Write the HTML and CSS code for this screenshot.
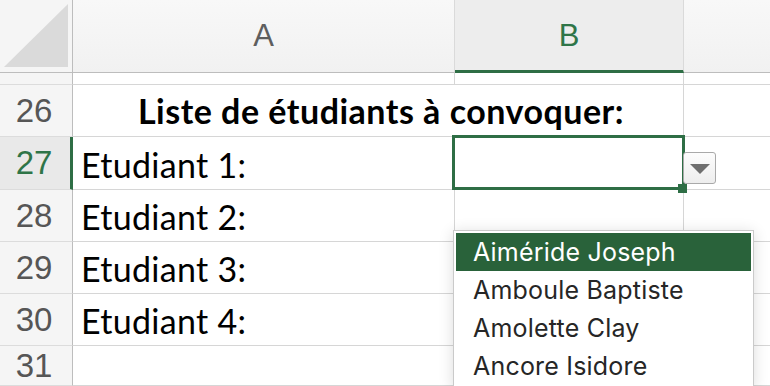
FILE: index.html
```html
<!DOCTYPE html>
<html lang="fr">
<head>
<meta charset="utf-8">
<title>Liste de étudiants</title>
<link rel="stylesheet" href="styles.css">
</head>
<body>
<div class="sheet">
  <div class="corner"><svg class="corner-tri" width="66" height="64" viewBox="0 0 66 64"><polygon points="0,63 64,0 64,63" fill="#dadada"/></svg></div>
  <div class="colhead">A</div>
  <div class="colhead colhead-sel">B</div>
  <div class="colhead colhead-last"></div>

  <div class="rowhead"></div>
  <div class="cell"></div>
  <div class="cell"></div>
  <div class="cell cell-last"></div>

  <div class="rowhead">26</div>
  <div class="cell cell-title">Liste de étudiants à convoquer:</div>
  <div class="cell cell-last"></div>

  <div class="rowhead rowhead-sel">27</div>
  <div class="cell">Etudiant 1:</div>
  <div class="cell cell-active">
    <div class="selection"></div>
    <div class="fill-handle"></div>
    <div class="dd-button"><svg width="20" height="10" viewBox="0 0 20 10"><polygon points="0,0 20,0 10,10" fill="#6e6e6e"/></svg></div>
    <ul class="dd-list">
      <li class="dd-item dd-item-sel">Aiméride Joseph</li>
      <li class="dd-item">Amboule Baptiste</li>
      <li class="dd-item">Amolette Clay</li>
      <li class="dd-item">Ancore Isidore</li>
    </ul>
  </div>
  <div class="cell cell-last"></div>

  <div class="rowhead">28</div>
  <div class="cell">Etudiant 2:</div>
  <div class="cell"></div>
  <div class="cell cell-last"></div>

  <div class="rowhead">29</div>
  <div class="cell">Etudiant 3:</div>
  <div class="cell"></div>
  <div class="cell cell-last"></div>

  <div class="rowhead">30</div>
  <div class="cell">Etudiant 4:</div>
  <div class="cell"></div>
  <div class="cell cell-last"></div>

  <div class="rowhead">31</div>
  <div class="cell"></div>
  <div class="cell"></div>
  <div class="cell cell-last"></div>
</div>
</body>
</html>
```

FILE: styles.css
```css
html, body {
  margin: 0;
  padding: 0;
  background: #ffffff;
  overflow: hidden;
}

.sheet {
  width: 770px;
  height: 386px;
  display: grid;
  grid-template-columns: 73px 382px 229px 1fr;
  grid-template-rows: 73px 12px 52px 53px 52px 52px 52px 1fr;
  overflow: hidden;
}

.sheet > div {
  box-sizing: border-box;
}

.corner {
  background: #f5f5f5;
  border-right: 1px solid #bdbdbd;
  border-bottom: 1px solid #bdbdbd;
  position: relative;
}

.corner-tri {
  position: absolute;
  left: 4px;
  top: 4px;
}

.colhead {
  background: linear-gradient(#f8f8f8, #f1f1f1);
  border-right: 1px solid #dadada;
  border-bottom: 1px solid #bdbdbd;
  display: flex;
  align-items: center;
  justify-content: center;
  font-family: "Liberation Sans", Arial, sans-serif;
  font-size: 31px;
  color: #5e5e5e;
}

.colhead-sel {
  background: #ededed;
  color: #2f7548;
  border-bottom: 3px solid #2e6e45;
  padding-top: 2px;
}

.colhead-last {
  border-right: none;
}

.rowhead {
  background: #f5f5f5;
  border-right: 1px solid #bdbdbd;
  border-bottom: 1px solid #dcdcdc;
  display: flex;
  align-items: center;
  justify-content: center;
  padding-right: 4px;
  font-family: "Liberation Sans", Arial, sans-serif;
  font-size: 33px;
  color: #565656;
}

.rowhead-sel {
  background: #e9e9e9;
  color: #2f7548;
  border-right: 3px solid #2e6e45;
  padding-right: 2px;
}

.cell {
  border-right: 1px solid #d6d6d6;
  border-bottom: 1px solid #d6d6d6;
  display: flex;
  align-items: flex-end;
  padding: 0 0 4px 8px;
  font-family: Lato, "Open Sans", sans-serif;
  font-size: 34px;
  letter-spacing: 0.3px;
  color: #000000;
  white-space: nowrap;
}

.cell-last {
  border-right: none;
}

.cell-title {
  grid-column: span 2;
  justify-content: center;
  padding: 0 0 5px 6px;
  font-weight: 700;
  letter-spacing: 0.5px;
}

.cell-active {
  position: relative;
}

.selection {
  position: absolute;
  left: -3px;
  top: -2px;
  width: 233px;
  height: 55px;
  box-sizing: border-box;
  border: 3px solid #2e6e45;
  z-index: 2;
}

.fill-handle {
  position: absolute;
  left: 223px;
  top: 47px;
  width: 9px;
  height: 9px;
  background: #2e6e45;
  z-index: 3;
}

.dd-button {
  position: absolute;
  left: 228px;
  top: 15px;
  width: 33px;
  height: 32px;
  box-sizing: border-box;
  border: 1.5px solid #a9a9a9;
  border-radius: 3px;
  background: linear-gradient(#fcfcfc, #ededed);
  display: flex;
  align-items: center;
  justify-content: center;
  padding-top: 2px;
  z-index: 4;
}

.dd-list {
  position: absolute;
  left: -2px;
  top: 93px;
  width: 301px;
  margin: 0;
  padding: 2px;
  list-style: none;
  box-sizing: border-box;
  background: #ffffff;
  border: 1px solid #cacaca;
  box-shadow: 0 2px 14px rgba(0, 0, 0, 0.14);
  z-index: 5;
}

.dd-item {
  height: 38px;
  line-height: 38px;
  padding-left: 17px;
  font-family: Inter, "Liberation Sans", sans-serif;
  font-size: 25px;
  letter-spacing: 0.2px;
  color: #262626;
  white-space: nowrap;
}

.dd-item-sel {
  background: #29623a;
  color: #ffffff;
}
```
